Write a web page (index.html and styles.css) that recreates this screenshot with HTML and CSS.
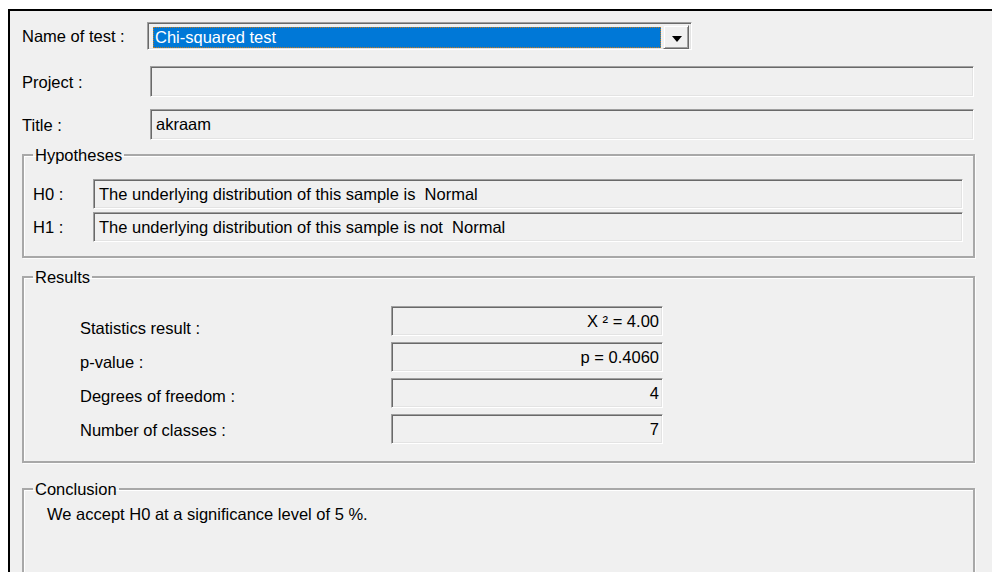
FILE: index.html
```html
<!DOCTYPE html>
<html lang="en">
<head>
<meta charset="utf-8">
<title>Chi-squared test</title>
<link rel="stylesheet" href="styles.css">
</head>
<body>
<div class="frame">
  <div class="head">
    <div class="row row-test">
      <span class="lbl lbl-test">Name of test :</span>
      <div class="combo">
        <div class="combo-value"><span>Chi-squared test</span></div>
        <div class="combo-btn">
          <svg width="10" height="6" viewBox="0 0 10 6"><path d="M0 0H10L5 6Z" fill="#000"/></svg>
        </div>
      </div>
    </div>
    <div class="row row-project">
      <span class="lbl">Project :</span>
      <div class="field field-wide"></div>
    </div>
    <div class="row row-title">
      <span class="lbl">Title :</span>
      <div class="field field-wide">akraam</div>
    </div>
  </div>

  <fieldset class="group group-hyp">
    <legend>Hypotheses</legend>
    <div class="hyp">
      <div class="hrow">
        <span class="hlbl">H0 :</span>
        <div class="field field-hyp">The underlying distribution of this sample is&nbsp; Normal</div>
      </div>
      <div class="hrow">
        <span class="hlbl">H1 :</span>
        <div class="field field-hyp">The underlying distribution of this sample is not&nbsp; Normal</div>
      </div>
    </div>
  </fieldset>

  <fieldset class="group group-res">
    <legend>Results</legend>
    <div class="res">
      <div class="res-labels">
        <span>Statistics result :</span>
        <span>p-value :</span>
        <span>Degrees of freedom :</span>
        <span>Number of classes :</span>
      </div>
      <div class="res-values">
        <div class="field field-num">X ² = 4.00</div>
        <div class="field field-num">p = 0.4060</div>
        <div class="field field-num">4</div>
        <div class="field field-num">7</div>
      </div>
    </div>
  </fieldset>

  <fieldset class="group group-concl">
    <legend>Conclusion</legend>
    <p class="concl">We accept H0 at a significance level of 5 %.</p>
  </fieldset>
</div>
</body>
</html>
```

FILE: styles.css
```css
html, body {
  margin: 0;
  padding: 0;
  background: #fff;
  overflow: hidden;
}

body {
  font-family: "Liberation Sans", Arial, sans-serif;
  font-size: 16.5px;
  color: #000;
}

.frame {
  margin: 9px 0 0 8px;
  border-top: 2px solid #000;
  border-left: 2px solid #000;
  background: #f0f0f0;
  height: 563px;
  overflow: hidden;
  box-sizing: border-box;
  padding: 11px 0 0 12px;
}

/* top rows */
.row {
  display: flex;
  align-items: center;
}
.row-project { margin-top: 16px; }
.row-title { margin-top: 12px; }

.lbl {
  width: 128px;
  flex: none;
  line-height: 18px;
}
.lbl-test { width: 125px; }

/* sunken edit field */
.field {
  box-sizing: border-box;
  height: 31px;
  border: 1px solid;
  border-color: #a0a0a0 #fff #fff #a0a0a0;
  box-shadow: inset 1px 1px 0 #696969, inset -1px -1px 0 #e3e3e3;
  background: #f0f0f0;
  padding: 0 4px 0 5px;
  line-height: 29px;
  white-space: nowrap;
  overflow: hidden;
}
.field-wide { width: 824px; }

/* combo box */
.combo {
  box-sizing: border-box;
  width: 545px;
  height: 28px;
  border: 1px solid;
  border-color: #a0a0a0 #fff #fff #a0a0a0;
  box-shadow: inset 1px 1px 0 #696969, inset -1px -1px 0 #e3e3e3;
  background: #f0f0f0;
  display: flex;
  align-items: flex-start;
  padding: 2px 2px 0 2px;
}
.combo-value {
  flex: 1;
  margin: 2px 2px 0 3px;
  height: 21px;
  box-sizing: border-box;
  background: #0078d7;
  border: 1px dotted #c07a1e;
  color: #fff;
  line-height: 19px;
  padding-left: 1px;
  white-space: nowrap;
}
.combo-btn {
  box-sizing: border-box;
  width: 26px;
  height: 24px;
  background: #f0f0f0;
  border: 1px solid;
  border-color: #f0f0f0 #696969 #696969 #f0f0f0;
  box-shadow: inset 1px 1px 0 #fff, inset -1px -1px 0 #a0a0a0;
  display: flex;
  align-items: center;
  justify-content: center;
  padding: 3px 0 0 1px;
}
.combo-btn svg { display: block; }

/* group boxes */
.group {
  box-sizing: border-box;
  width: 953px;
  margin: 0;
  padding: 0 10px 0 0;
  border: 2px solid #a8a8a8;
  box-shadow: inset 1px 1px 0 #fff, 1px 1px 0 #fcfcfc;
  min-inline-size: 0;
}
.group legend {
  margin-left: 9px;
  padding: 0 2px;
  line-height: 18px;
}

.group-hyp {
  margin-top: 6px;
  padding-top: 15px;
  padding-bottom: 14px;
}
.hyp { padding-left: 9px; }
.hrow {
  display: flex;
  align-items: center;
}
.hrow + .hrow { margin-top: 3px; }
.hlbl {
  width: 60px;
  flex: none;
}
.field-hyp {
  flex: 1;
  height: 30px;
  line-height: 28px;
}

.group-res {
  margin-top: 10px;
  padding-top: 20px;
  padding-bottom: 14px;
}
.res {
  display: flex;
  padding-left: 56px;
}
.res-labels {
  width: 311px;
  display: flex;
  flex-direction: column;
  padding-top: 5px;
}
.res-labels span {
  line-height: 34px;
}
.res-values {
  display: flex;
  flex-direction: column;
  gap: 6px;
}
.field-num {
  width: 272px;
  height: 30px;
  line-height: 28px;
  text-align: right;
  padding-right: 3px;
}

.group-concl {
  margin-top: 17px;
  height: 160px;
  padding-top: 7px;
}
.concl {
  margin: 0;
  padding-left: 23px;
  line-height: 18px;
}
```
